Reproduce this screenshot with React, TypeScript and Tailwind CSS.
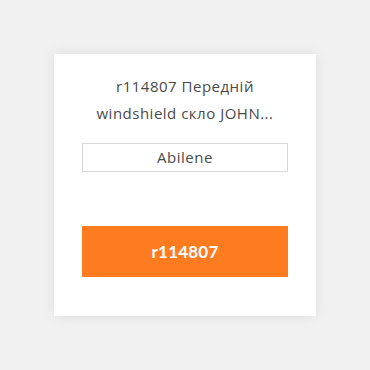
import React from "react";

const App = () => {
  return (
    <div className="w-[370px] h-[370px] bg-[#f1f1f1] flex items-center justify-center font-['Open_Sans','Noto_Sans',sans-serif]">
      <div className="w-[262px] h-[262px] bg-white shadow-[0_0_14px_rgba(0,0,0,0.08)] px-[28px] pt-[19px] flex flex-col">
        <p className="text-[15px] leading-[27px] text-[#4a4a4a] text-center tracking-[0.5px]">
          r114807 Передній
          <br />
          windshield скло JOHN...
        </p>
        <div className="mt-[16px] h-[29px] border border-[#d8d8d8] flex items-center justify-center text-[15px] tracking-[0.5px] text-[#4a4a4a]">
          Abilene
        </div>
        <button className="mt-[54px] h-[51px] bg-[#ff7b1f] text-white font-bold text-[17px] font-['Lato',sans-serif] tracking-[0.2px]">
          r114807
        </button>
      </div>
    </div>
  );
};

export default App;
